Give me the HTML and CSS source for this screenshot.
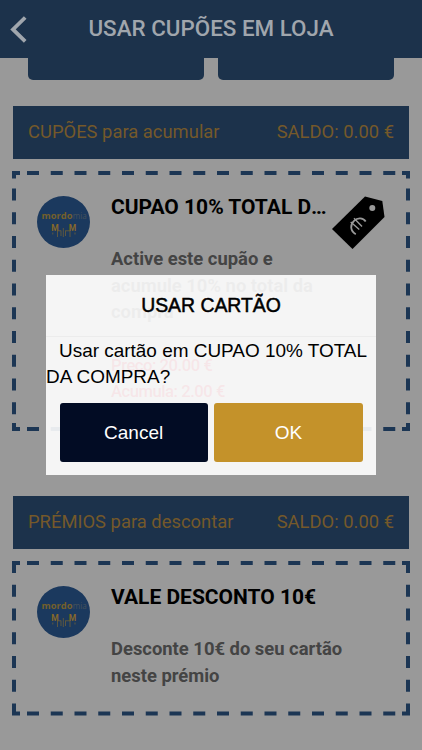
FILE: index.html
```html
<!DOCTYPE html>
<html lang="pt">
<head>
<meta charset="utf-8">
<title>Usar cupões em loja</title>
<link rel="stylesheet" href="styles.css">
</head>
<body>
<header class="header">
  <svg class="back" viewBox="0 0 17 28"><path d="M15.200 1.500 3 13.400 15.200 25.300" fill="none" stroke="#a0a6ad" stroke-width="3.800"/></svg>
  <h1>USAR CUPÕES EM LOJA</h1>
</header>
<main class="content">
  <div class="tabs"><div class="tab"></div><div class="tab"></div></div>
  <section>
    <div class="bar"><span class="bar-name">CUPÕES para acumular</span><span class="saldo">SALDO: 0.00 €</span></div>
    <article class="card coupon">
      <svg class="frame" viewBox="0 0 398 260">
        <path class="dash" d="M15 2H384M15 258H384M2 17.500V244M396 17.500V244"/>
        <path class="corner" d="M8 2H2V7.500M390 2H396V7.500M8 258H2V252M390 258H396V252"/>
      </svg>
      <svg class="logo" viewBox="0 0 53 52">
        <ellipse cx="26.500" cy="26" rx="26.500" ry="26" fill="#1b395e"/>
        <text x="4.500" y="22.500" class="word" textLength="31" lengthAdjust="spacingAndGlyphs">mordo</text>
        <text x="35.700" y="22.500" class="word thin" textLength="14" lengthAdjust="spacingAndGlyphs">mia</text>
        <text x="14.200" y="35" class="initial">M</text>
        <text x="31.700" y="35" class="initial">M</text>
        <path class="rays" d="M20.500 41V35M24 40V34.500M28.500 40V34.500M33 41V35M26.300 41V32M20.500 34.800H24M28.500 34.800H33M15.800 36.500V38.500M38 36.500V38.500"/>
      </svg>
      <div class="info">
        <h2 class="long">CUPAO 10% TOTAL DA COMPRA</h2>
        <p class="desc">Active este cupão e acumule 10% no total da compra</p>
        <p class="price">Preço: 20.00 €<br>Acumula: 2.00 €</p>
      </div>
      <svg class="tag" viewBox="0 0 54 54">
        <path d="M0 33 33 .5 50.300 5 52.500 21 20.500 53Z" fill="#000"/>
        <circle cx="40.300" cy="12" r="3" fill="#999"/>
        <g fill="none" stroke="#999" stroke-width="1.800"><path d="M33.700 25.500C31 21.500 25.500 21.500 22 24.800C18 28.500 18 35 23.800 38.300"/><path d="M18.700 26 27.300 33.500M22 22.200 30 30.500" stroke-width="1.400"/></g>
      </svg>
    </article>
  </section>
  <section class="rewards">
    <div class="bar"><span class="bar-name">PRÉMIOS para descontar</span><span class="saldo">SALDO: 0.00 €</span></div>
    <article class="card reward">
      <svg class="frame" viewBox="0 0 398 155">
        <path class="dash" d="M15 2H384M15 152.500H384M2 23.700V132M396 23.700V132"/>
        <path class="corner" d="M8 2H2V12M390 2H396V12M8 152.500H2V142.500M390 152.500H396V142.500"/>
      </svg>
      <svg class="logo" viewBox="0 0 53 52">
        <ellipse cx="26.500" cy="26" rx="26.500" ry="26" fill="#1b395e"/>
        <text x="4.500" y="22.500" class="word" textLength="31" lengthAdjust="spacingAndGlyphs">mordo</text>
        <text x="35.700" y="22.500" class="word thin" textLength="14" lengthAdjust="spacingAndGlyphs">mia</text>
        <text x="14.200" y="35" class="initial">M</text>
        <text x="31.700" y="35" class="initial">M</text>
        <path class="rays" d="M20.500 41V35M24 40V34.500M28.500 40V34.500M33 41V35M26.300 41V32M20.500 34.800H24M28.500 34.800H33M15.800 36.500V38.500M38 36.500V38.500"/>
      </svg>
      <div class="info">
        <h2>VALE DESCONTO 10€</h2>
        <p class="desc">Desconte 10€ do seu cartão neste prémio</p>
      </div>
    </article>
  </section>
</main>
<div class="dialog" role="dialog">
  <h3>USAR CARTÃO</h3>
  <p class="message">Usar cartão em CUPAO 10% TOTAL DA COMPRA?</p>
  <div class="actions"><button class="cancel">Cancel</button><button class="ok">OK</button></div>
</div>
</body>
</html>
```
FILE: styles.css
```css
* { box-sizing: border-box; }
body { margin: 0; height: 750px; overflow: hidden; background: #999; font-family: Roboto, sans-serif; color: #000; }
h1, h2, h3, p { margin: 0; }
.header { height: 58px; background: #1c324b; display: flex; align-items: center; justify-content: center; position: relative; }
.header h1 { font-size: 22.400px; line-height: 28px; font-weight: 500; color: #a0a6ad; white-space: nowrap; padding-bottom: 3px; }
.back { position: absolute; left: 10px; top: 16px; width: 17px; height: 28px; }
.content { padding: 0 12px; }
.tabs { display: flex; gap: 14px; padding: 0 16px; height: 48px; }
.tab { width: 176px; height: 21.500px; background: #1c324b; border-radius: 0 0 5px 5px; }
.bar { margin: 0 1px; height: 52.500px; background: #1c324b; color: #75592a; display: flex; align-items: center; justify-content: space-between; padding: 0 15px 2px; font-size: 18.400px; white-space: nowrap; }
.card { position: relative; display: flex; margin-top: 12px; padding: 25px 20px 0 25px; }
.coupon { height: 260px; }
.reward { height: 155px; }
.rewards { margin-top: 65.500px; }
.frame { position: absolute; inset: 0; width: 100%; height: 100%; }
.dash, .corner { fill: none; stroke: #1c3654; stroke-width: 4; }
.dash { stroke-dasharray: 12 11.750; }
.logo { width: 53px; height: 52px; flex: none; margin-right: 21px; }
.word { font: 700 9.500px "Open Sans", sans-serif; fill: #75602b; }
.thin { font-weight: 400; fill: #46525a; }
.initial { font: 700 8.500px Roboto, sans-serif; fill: #86682a; }
.rays { stroke: #6e6039; stroke-width: .8; fill: none; }
.info { width: 219px; flex: none; }
.reward .info { width: 260px; }
h2 { font-size: 21px; line-height: 25px; font-weight: 700; white-space: nowrap; margin-top: -1px; }
.long { overflow: hidden; text-overflow: ellipsis; }
.desc { color: #444; font-size: 18.400px; line-height: 26.500px; font-weight: 700; margin-top: 26.500px; }
.price { color: #a00018; font-size: 16.600px; line-height: 26.500px; font-weight: 500; letter-spacing: -.45px; margin-top: 27px; }
.tag { width: 54px; height: 54px; flex: none; margin-left: 2px; }
.dialog { position: absolute; left: 46px; top: 275px; width: 330px; height: 200px; background: rgba(255, 255, 255, .9); font-family: "Liberation Sans", sans-serif; }
.dialog h3 { height: 62px; border-bottom: 1px solid #ececec; font: 400 19.400px/61px "Liberation Sans", sans-serif; -webkit-text-stroke: .5px #000; text-align: center; }
.message { font-size: 18.950px; line-height: 26px; text-indent: 13px; height: 66px; padding-top: 1px; }
.actions { display: flex; gap: 6.500px; padding: 0 13.500px; }
.actions button { flex: 1; height: 59px; border: 0; border-radius: 3px; font: 19px "Liberation Sans", sans-serif; color: #fff; }
.cancel { background: #020c24; }
.ok { background: #c4922a; }
```
